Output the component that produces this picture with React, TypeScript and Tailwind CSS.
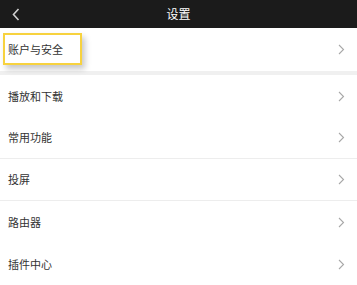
import React from "react";

const rows: { label: string; divider?: boolean }[] = [
  { label: "播放和下载" },
  { label: "常用功能", divider: true },
  { label: "投屏", divider: true },
  { label: "路由器" },
  { label: "插件中心" },
];

function Chevron({ className }: { className?: string }) {
  return (
    <svg width="7" height="11" viewBox="0 0 7 11" className={className} fill="none">
      <path d="M1 1l4.5 4.5L1 10" stroke="currentColor" strokeWidth="1.1" />
    </svg>
  );
}

function Row({ label, divider }: { label: string; divider?: boolean }) {
  return (
    <div
      className={
        "flex h-[42px] items-center justify-between pl-2 pr-[12px] " +
        (divider ? "border-b border-[#ededed]" : "")
      }
    >
      <span className="text-[11px] text-[#333]">{label}</span>
      <Chevron className="text-[#a8a8a8]" />
    </div>
  );
}

export default function App() {
  return (
    <div
      className="h-[285px] w-[357px] overflow-hidden bg-white"
      style={{ fontFamily: '"Noto Sans CJK SC", "Noto Sans", sans-serif' }}
    >
      <div className="relative flex h-[28px] items-center justify-center bg-[#1b1b1b]">
        <svg width="8" height="13" viewBox="0 0 8 13" className="absolute left-[12px] top-[8px] text-[#cfcfcf]" fill="none">
          <path d="M6.5 1L1.5 6.5l5 5.5" stroke="currentColor" strokeWidth="1.6" />
        </svg>
        <span className="text-[12px] text-white">设置</span>
      </div>
      <div className="flex h-[43px] items-start justify-between pr-[12px] pt-[5px]">
        <div className="ml-[3px] flex h-[32px] w-[79px] items-center border-2 border-[#f7d23e] pl-[3px] shadow-[3px_4px_6px_rgba(0,0,0,0.22)]">
          <span className="text-[11px] text-[#333]">账户与安全</span>
        </div>
        <Chevron className="mt-[11px] text-[#a8a8a8]" />
      </div>
      <div className="h-[4px] bg-[#f0f0f0]" />
      {rows.map((r, i) => (
        <Row key={i} label={r.label} divider={r.divider} />
      ))}
    </div>
  );
}
